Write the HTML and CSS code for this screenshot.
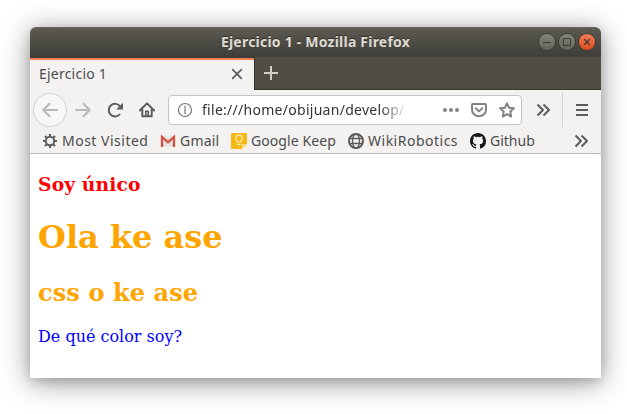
FILE: index.html
```html
<!DOCTYPE html>
<html lang="es">
<head>
<meta charset="utf-8">
<title>Ejercicio 1</title>
<link rel="stylesheet" href="styles.css">
</head>
<body>
<div class="window">
  <header class="titlebar">
    <span class="title">Ejercicio 1 - Mozilla Firefox</span>
    <div class="controls">
      <span class="control"><svg viewBox="0 0 16 16"><path d="M4 8.500h8"/></svg></span>
      <span class="control"><svg viewBox="0 0 16 16"><path d="M4.500 4.500h7v7h-7z"/></svg></span>
      <span class="control close"><svg viewBox="0 0 16 16"><path d="M5.300 5.300l5.400 5.400M10.700 5.300l-5.400 5.400"/></svg></span>
    </div>
  </header>
  <div class="tabs">
    <div class="tab"><span class="tab-name">Ejercicio 1</span><svg class="icon tab-close" viewBox="0 0 16 16"><path d="M3.700 3.700l8.600 8.600M12.300 3.700l-8.600 8.600"/></svg></div>
    <svg class="icon new-tab" viewBox="0 0 16 16"><path d="M8 1v14M1 8h14"/></svg>
  </div>
  <nav class="toolbar">
    <span class="back"><svg class="icon faded" viewBox="0 0 16 16"><path d="M15 8H1.500M7.500 1.800L1.300 8l6.200 6.200"/></svg></span>
    <svg class="icon faded forward" viewBox="0 0 16 16"><path d="M1 8h13.500M8.500 1.800L14.700 8l-6.200 6.200"/></svg>
    <svg class="icon reload" viewBox="0 0 16 16"><path d="M13 12A6.300 6.300 0 1 1 13 4.300"/><path class="solid" d="M16 .8v6.700H9.200z"/></svg>
    <svg class="icon home" viewBox="0 0 16 16"><path d="M.8 8.500L8 1.400l7.200 7.100M3.300 7.500v6.800h9.400V7.500"/><path class="door" d="M6.800 14V9.300h2.400V14"/></svg>
    <div class="address">
      <svg class="icon info" viewBox="0 0 16 16"><circle cx="8" cy="8" r="6.500"/><path d="M8 7v4.700M8 4.200v1.700"/></svg>
      <span class="url">file:///home/obijuan/develop/</span>
      <svg class="icon grey dots" viewBox="0 0 16 16"><circle class="solid" cx="2" cy="8" r="2"/><circle class="solid" cx="8" cy="8" r="2"/><circle class="solid" cx="14" cy="8" r="2"/></svg>
      <svg class="icon grey pocket" viewBox="0 0 16 16"><path d="M2 2h12a1 1 0 0 1 1 1v4.500a7 6.800 0 0 1-14 0V3a1 1 0 0 1 1-1z"/><path d="M4.700 6.200L8 9.400l3.300-3.200"/></svg>
      <svg class="icon grey star" viewBox="0 0 16 16"><path d="M8 1.300l2 4.400 4.900.6-3.600 3.300.9 5L8 12.200l-4.200 2.400.9-5L1.100 6.300 6 5.700z"/></svg>
    </div>
    <svg class="icon more" viewBox="0 0 16 16"><path d="M2.500 2.500L8 8l-5.500 5.500M8.500 2.500L14 8l-5.500 5.500"/></svg>
    <span class="divider"></span>
    <svg class="icon menu" viewBox="0 0 16 16"><path d="M2 3h12M2 8h12M2 13h12"/></svg>
  </nav>
  <div class="bookmarks">
    <a class="bookmark visited"><svg class="icon" viewBox="0 0 16 16"><circle cx="8" cy="8" r="4.200"/><path d="M8 1v2.500M8 12.500V15M1 8h2.500M12.500 8H15M3 3l1.900 1.900M11.100 11.100L13 13M13 3l-1.900 1.900M4.900 11.100L3 13"/></svg><span>Most Visited</span></a>
    <a class="bookmark gmail"><svg class="icon" viewBox="0 0 16 16"><path class="paper" d="M1 3h14v11H1z"/><path class="fold" d="M2 13l5-5M14 13L9 8"/><path class="letter" d="M2 14V4l6 5.300L14 4v10"/></svg><span>Gmail</span></a>
    <a class="bookmark keep"><svg class="icon" viewBox="0 0 16 16"><path class="note" d="M1 0h14a1 1 0 0 1 1 1v10l-5 5H1a1 1 0 0 1-1-1V1a1 1 0 0 1 1-1z"/><path class="corner" d="M11 16v-5h5z"/><path class="bulb" d="M6.300 9V8a3.200 3.200 0 1 1 3.400 0v1zM6.300 11.300h3.400"/></svg><span>Google Keep</span></a>
    <a class="bookmark wiki"><svg class="icon" viewBox="0 0 16 16"><circle cx="8" cy="8" r="7"/><ellipse class="thin" cx="8" cy="8" rx="3.500" ry="7"/><path class="thin" d="M1.800 5.500h12.400M1.800 10.500h12.400"/></svg><span>WikiRobotics</span></a>
    <a class="bookmark github"><svg class="icon" viewBox="0 0 16 16"><path class="cat" d="M8 0C3.580 0 0 3.580 0 8c0 3.540 2.290 6.530 5.470 7.590.4.070.55-.17.55-.38 0-.19-.01-.82-.01-1.490-2.010.37-2.530-.49-2.690-.94-.09-.23-.48-.94-.82-1.130-.28-.15-.68-.52-.01-.53.63-.01 1.080.58 1.230.82.72 1.210 1.870.87 2.330.66.070-.52.28-.87.51-1.070-1.780-.2-3.640-.89-3.640-3.950 0-.87.31-1.590.82-2.150-.08-.2-.36-1.020.08-2.120 0 0 .67-.21 2.200.82a7.600 7.600 0 0 1 4 0c1.530-1.040 2.200-.82 2.200-.82.44 1.100.16 1.920.08 2.120.51.560.82 1.270.82 2.150 0 3.070-1.870 3.750-3.650 3.950.29.25.54.73.54 1.480 0 1.070-.01 1.930-.01 2.200 0 .21.15.46.55.38A8 8 0 0 0 16 8c0-4.420-3.580-8-8-8z"/></svg><span>Github</span></a>
    <svg class="icon overflow" viewBox="0 0 16 16"><path d="M2.500 2.500L8 8l-5.500 5.500M8.500 2.500L14 8l-5.500 5.500"/></svg>
  </div>
  <main class="page">
    <h3>Soy único</h3>
    <h1>Ola ke ase</h1>
    <h2>css o ke ase</h2>
    <p>De qué color soy?</p>
  </main>
</div>
</body>
</html>
```
FILE: styles.css
```css
* { box-sizing: border-box; }
body {
  margin: 0;
  padding: 27px 0 0 30px;
  height: 414px;
  overflow: hidden;
  background: #fff;
  font: 14px/20px "Noto Sans", "Open Sans", sans-serif;
  color: #4c4c4c;
}
.window {
  width: 571px;
  height: 351px;
  display: flex;
  flex-direction: column;
  border-radius: 6px 6px 0 0;
  background: #fff;
  box-shadow: 0 4px 28px rgba(0, 0, 0, .43), 0 3px 10px rgba(0, 0, 0, .12);
}
.titlebar {
  height: 30px;
  display: grid;
  grid-template-columns: 64px 1fr 64px;
  align-items: center;
  border-radius: 6px 6px 0 0;
  background: linear-gradient(#5c5a51, #3e3d38);
  border-top: 1px solid #66645c;
}
.title {
  grid-column: 2;
  text-align: center;
  font-weight: 700;
  font-size: 14px;
  letter-spacing: .22px;
  padding-bottom: 1px;
  color: #dfdbd2;
  white-space: nowrap;
  text-shadow: 0 -1px #302f2b;
}
.controls { display: flex; gap: 4px; padding: 0 0 1px 2px; }
.control {
  width: 16px;
  height: 16px;
  border-radius: 50%;
  background: linear-gradient(#84837c, #62615a);
  box-shadow: 0 0 0 1px #393832;
}
.control svg { display: block; width: 16px; height: 16px; fill: none; stroke: #3c3b37; }
.control.close { background: linear-gradient(#f47b59, #df4b1c); }
.control.close svg { stroke-width: 1.3; }

.icon { width: 16px; height: 16px; flex: none; fill: none; stroke: #5c5c5b; stroke-width: 2; stroke-linecap: round; stroke-linejoin: round; }
.solid { fill: currentColor; stroke: none; }
.tabs {
  height: 33px;
  display: flex;
  background: #504d45;
  border-bottom: 1px solid #36342f;
}
.tab {
  width: 224px;
  height: 33px;
  display: flex;
  align-items: center;
  justify-content: space-between;
  padding: 0 9px;
  background: #f3f2f1;
  border-top: 1px solid #3e3d38;
  box-shadow: inset 0 2px #f27e52, 1px 0 #36342f;
}
.tab-name { letter-spacing: .22px; }
.tab-close { stroke-width: 1.7; }
.new-tab { margin: 8px 0 0 9px; stroke: #d2cec6; stroke-linecap: butt; }
.toolbar {
  height: 40px;
  display: flex;
  align-items: center;
  padding-left: 3px;
  background: #f3f2f1;
}
.back {
  width: 34px;
  height: 34px;
  display: grid;
  place-items: center;
  border: 1px solid #d1d0cf;
  border-radius: 50%;
  background: #f8f7f6;
}
.faded { stroke: #b9b8b7; }
.forward { margin-left: 8px; }
.reload { margin-left: 16px; color: #5c5c5b; stroke-linecap: butt; }
.home { margin-left: 16px; }
.door { stroke-width: 1.6; }
.address {
  width: 354px;
  height: 30px;
  margin-left: 13px;
  display: flex;
  align-items: center;
  padding-left: 8px;
  border: 1px solid #c5c4c2;
  border-radius: 4px;
  background: #fff;
}
.info { stroke: #777; stroke-width: 1.2; }
.url {
  width: 208px;
  margin-left: 9px;
  overflow: hidden;
  white-space: nowrap;
  letter-spacing: .28px;
  color: #333;
  -webkit-mask-image: linear-gradient(90deg, #000 178px, transparent 206px);
  mask-image: linear-gradient(90deg, #000 178px, transparent 206px);
}
.grey { stroke: #828282; color: #828282; }
.dots { margin-left: 33px; }
.pocket, .star { margin-left: 12px; }
.more { margin-left: 13px; }
.more, .overflow { stroke-linecap: butt; }
.divider { width: 1px; height: 34px; margin-left: 11px; background: #d3d2d1; }
.menu { margin-left: 11px; stroke-linecap: butt; }
.bookmarks {
  height: 24px;
  display: flex;
  gap: 12px;
  padding: 3px 12px 0;
  background: #f3f2f1;
  border-bottom: 1px solid #bbb9b7;
}
.bookmark { display: flex; gap: 4px; height: 16px; align-items: center; white-space: nowrap; }
.visited .icon, .gmail .icon { stroke-linecap: butt; }
.visited span { width: 86px; letter-spacing: .5px; }
.gmail span { width: 39px; letter-spacing: .2px; }
.keep span { width: 85px; letter-spacing: .08px; }
.wiki span { width: 90px; letter-spacing: .5px; }
.github span { width: 45px; }
.overflow { margin-left: auto; }
.paper { fill: #e7e5e2; stroke: none; }
.fold { stroke: #c9c7c5; stroke-width: 1; }
.letter { stroke: #d54b3d; stroke-width: 2.2; stroke-linejoin: miter; }
.note { fill: #f5b912; stroke: none; }
.corner { fill: #fbdc7d; stroke: none; }
.bulb { stroke: #fff1c2; stroke-width: 1.2; }
.thin { stroke-width: 1.3; }
.cat { fill: #191717; stroke: none; }
.page {
  flex: 1;
  padding: 0 8px;
  font: 16px "DejaVu Serif", serif;
  color: #000;
}
h1, h2 { color: orange; }
h3 { color: red; }
h1 { font-size: 32px; margin: 23.44px 0 21.44px; }
h2 { font-size: 24px; margin: 19.92px 0; letter-spacing: .1px; }
h3 { font-size: 18.72px; margin: 18.72px 0; letter-spacing: .12px; }
p { color: blue; margin: 16px 0; }
```
